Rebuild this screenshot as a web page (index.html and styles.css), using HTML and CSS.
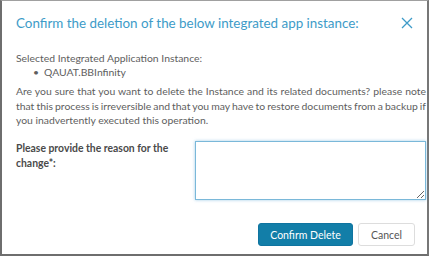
FILE: index.html
```html
<!DOCTYPE html>
<html lang="en">
<head>
    <meta charset="UTF-8">
    <meta name="viewport" content="width=device-width, initial-scale=1.0">
    <title>Delete Integrated App Instance</title>
    <link rel="stylesheet" href="styles.css">
</head>
<body>
    <div class="dialog">
        <div class="dialog-header">
            <h1 class="dialog-title">Confirm the deletion of the below integrated app instance:</h1>
            <button class="close-button" aria-label="Close">
                <svg width="12" height="12" viewBox="0 0 12 12"><path d="M1 1 L11 11 M11 1 L1 11" stroke="#3d9bc8" stroke-width="1.3" fill="none"/></svg>
            </button>
        </div>
        <div class="dialog-body">
            <p class="selected-label">Selected Integrated Application Instance:</p>
            <ul class="instance-list">
                <li>QAUAT.BBInfinity</li>
            </ul>
            <p class="warning"><span class="line">Are you sure that you want to delete the Instance and its related documents? please note</span><span class="line">that this process is irreversible and that you may have to restore documents from a backup if</span>you inadvertently executed this operation.</p>
            <div class="reason-row">
                <label class="reason-label" for="reason">Please provide the reason for the change*:</label>
                <textarea class="reason-input" id="reason"></textarea>
            </div>
        </div>
        <div class="dialog-footer">
            <button class="btn btn-primary">Confirm Delete</button>
            <button class="btn btn-default">Cancel</button>
        </div>
    </div>
</body>
</html>
```

FILE: styles.css
```css
* {
    margin: 0;
    padding: 0;
    box-sizing: border-box;
}
body {
    font-family: 'Lato', 'Open Sans', sans-serif;
    background: #fff;
    color: #5e5e5e;
}
.dialog {
    height: 256px;
    width: 429px;
    background: #fff;
    border-top: 1px solid #a0a0a0;
    border-left: 2px solid #6e6e6e;
    border-right: 2px solid #777;
    border-bottom: 2px solid #6e6e6e;
    display: flex;
    flex-direction: column;
}
.dialog-header {
    display: flex;
    justify-content: space-between;
    align-items: center;
    padding: 13px 14px 0 14px;
}
.dialog-title {
    font-size: 13.4px;
    font-weight: 400;
    color: #3d9bc8;
    line-height: 18px;
}
.close-button {
    background: none;
    border: none;
    width: 12px;
    height: 12px;
    display: flex;
    cursor: pointer;
}
.dialog-body {
    padding: 19px 1px 0 14px;
    font-size: 10.4px;
}
.selected-label {
    line-height: 14px;
}
.instance-list {
    list-style: none;
    padding-left: 26px;
    line-height: 14px;
}
.instance-list li::before {
    content: '\2022';
    margin-right: 5px;
    margin-left: -9px;
}
.warning {
    margin-top: 5px;
    line-height: 14.5px;
    text-align: justify;
}
.warning .line {
    display: block;
    text-align-last: justify;
    word-spacing: -1.5px;
    white-space: nowrap;
}
.reason-row {
    display: grid;
    grid-template-columns: 179px 231px;
    margin-top: 13px;
}
.reason-label {
    font-weight: 700;
    line-height: 15px;
    color: #4a4a4a;
}
.reason-input {
    height: 59px;
    border: 1px solid #7ab8d9;
    box-shadow: 0 0 3px rgba(100, 170, 215, 0.6);
    resize: vertical;
    outline: none;
}
.dialog-footer {
    display: flex;
    justify-content: flex-end;
    gap: 5px;
    padding: 0 12px 0 0;
    margin-top: auto;
    margin-bottom: 8px;
}
.btn {
    font-family: 'Lato', 'Open Sans', sans-serif;
    font-size: 10.5px;
    height: 23px;
    border-radius: 3px;
    cursor: pointer;
}
.btn-primary {
    width: 95px;
    background-color: #127ea8;
    border: 1px solid #0f74a0;
    color: #fff;
}
.btn-default {
    width: 57px;
    background: #fff;
    border: 1px solid #ddd;
    color: #555;
}
```
